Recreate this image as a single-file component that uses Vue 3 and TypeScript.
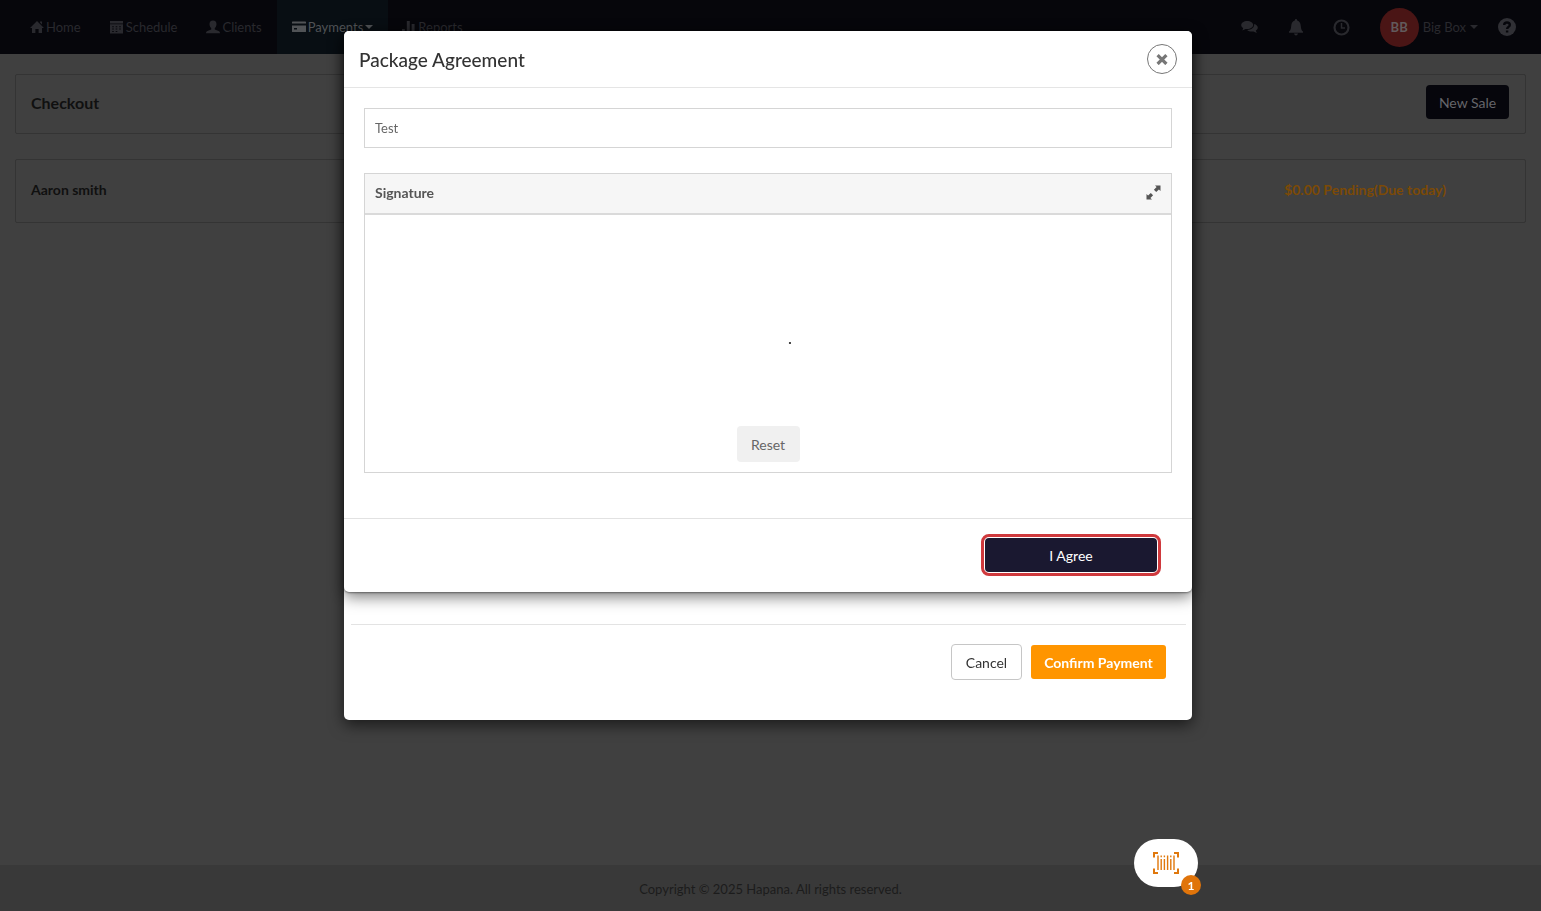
<script setup lang="ts">
import { ref } from 'vue'

interface NavItem {
  label: string
  icon: string
  active?: boolean
}

const navItems: NavItem[] = [
  { label: 'Home', icon: 'M7 1 L14 8 H12 V13 H8.6 V9 H5.4 V13 H2 V8 H0 Z M10 1.6 h2 v3 l-2 -2 z' },
  { label: 'Schedule', icon: 'M0 1 h13 v2.4 h-13 z M0 4.2 h13 v9.3 h-13 z M2.2 6.2 v1 h1.6 v-1 z M5.7 6.2 v1 h1.6 v-1 z M9.2 6.2 v1 h1.6 v-1 z M2.2 8.6 v1 h1.6 v-1 z M5.7 8.6 v1 h1.6 v-1 z M9.2 8.6 v1 h1.6 v-1 z M2.2 11 v1 h1.6 v-1 z M5.7 11 v1 h1.6 v-1 z' },
  { label: 'Clients', icon: 'M7 .5 C9.4 .5 10.6 2 10.5 4.2 C10.4 6.2 9.6 7.3 8.8 8.1 V9.4 L12.6 11 C13.6 11.5 14 12 14 13.3 H0 C0 12 .4 11.5 1.4 11 L5.2 9.4 V8.1 C4.4 7.3 3.6 6.2 3.5 4.2 C3.4 2 4.6 .5 7 .5 Z' },
  { label: 'Payments', icon: 'M0 2 Q0 1.4 .6 1.4 H13.4 Q14 1.4 14 2 V3.6 H0 Z M0 5.4 H14 V11.4 Q14 12 13.4 12 H.6 Q0 12 0 11.4 Z M2 8 v1.4 h3 v-1.4 z', active: true },
  { label: 'Reports', icon: 'M0 9 h2.8 v4.5 h-2.8 z M4.8 1 h3 v12.5 h-3 z M9.6 4 h3 v9.5 h-3 z' },
]

const agreementOpen = ref(true)
const hasStroke = ref(true)
</script>

<template>
  <div class="page">
    <header class="topbar">
      <nav class="nav">
        <a v-for="item in navItems" :key="item.label" href="#" class="nav-link" :class="{ active: item.active }">
          <svg width="14" height="14" viewBox="0 0 14 14" fill="currentColor" fill-rule="evenodd" aria-hidden="true"><path :d="item.icon" /></svg>
          <span>{{ item.label }}</span>
          <i v-if="item.active" class="caret"></i>
        </a>
      </nav>
      <div class="tools">
        <button class="tool" aria-label="Messages">
          <svg width="17" height="14" viewBox="0 0 17 14" fill="currentColor"><path d="M6.2 1 C9.6 1 12.2 2.7 12.2 5 S9.6 9 6.2 9 L4.6 8.9 L1.4 10.4 L2.2 8 C.9 7.3 .2 6.2 .2 5 C.2 2.7 2.9 1 6.2 1 Z M13.2 4 C15.4 4.6 16.8 6 16.8 7.6 C16.8 8.9 16 9.9 14.8 10.6 L15.8 13 L12.4 11.5 C9.5 11.8 7.2 11 6.2 9.9 C10.4 9.9 13.4 7.8 13.2 4 Z" /></svg>
        </button>
        <button class="tool" aria-label="Notifications">
          <svg width="16" height="17" viewBox="0 0 16 17" fill="currentColor"><path d="M8 0 C8.8 0 9.2 .6 9.2 1.5 C11.6 2.2 12.6 4 12.8 7 C13 10 13.6 11.4 15 12.6 V13.8 H1 V12.6 C2.4 11.4 3 10 3.2 7 C3.4 4 4.4 2.2 6.8 1.5 C6.8 .6 7.2 0 8 0 Z M6 14.6 H10 C9.8 15.8 9 16.4 8 16.4 S6.2 15.8 6 14.6 Z" /></svg>
        </button>
        <button class="tool" aria-label="History">
          <svg width="17" height="17" viewBox="0 0 17 17" fill="none" stroke="currentColor"><circle cx="8.5" cy="8.5" r="7" stroke-width="2.2" /><path d="M8.5 4 V9 H12" stroke-width="1.5" /></svg>
        </button>
        <button class="account">
          <span class="avatar">BB</span>
          <span>Big Box</span>
          <i class="caret"></i>
        </button>
        <button class="tool help" aria-label="Help">
          <svg width="18" height="18" viewBox="0 0 18 18"><circle cx="9" cy="9" r="9" fill="currentColor" /><path d="M6.2 7 C6.2 3.7 11.8 3.8 11.8 6.9 C11.8 8.8 9.1 8.9 9.1 11 M9.1 12.4 V14.4" fill="none" stroke="#06060b" stroke-width="2.4" /></svg>
        </button>
      </div>
    </header>

    <main class="content">
      <section class="card title-card">
        <h1>Checkout</h1>
        <button class="new-sale">New Sale</button>
      </section>
      <section class="card client-card">
        <strong>Aaron smith</strong>
        <strong class="pending">$0.00 Pending(Due today)</strong>
      </section>
    </main>

    <footer class="footer">Copyright © 2025 Hapana. All rights reserved.</footer>
  </div>

  <div class="modal-layer">
    <section class="dialog payment" aria-label="Payment">
      <div class="payment-actions">
        <button class="cancel">Cancel</button>
        <button class="confirm">Confirm Payment</button>
      </div>
    </section>

    <section v-if="agreementOpen" class="dialog agreement" role="dialog" aria-labelledby="agreement-title">
      <header class="dialog-head">
        <h2 id="agreement-title">Package Agreement</h2>
        <button class="close" aria-label="Close" @click="agreementOpen = false">
          <svg width="12" height="12" viewBox="0 0 12 12" fill="none" stroke="currentColor" stroke-width="3.2"><path d="M1.6 2.2 L10.4 11 M10.4 2.2 L1.6 11" /></svg>
        </button>
      </header>
      <div class="dialog-body">
        <div class="terms">Test</div>
        <div class="signature">
          <div class="signature-head">
            <h3>Signature</h3>
            <button class="expand" aria-label="Expand signature">
              <svg width="15" height="15" viewBox="0 0 15 15" fill="currentColor"><path d="M9 .5 H14.5 V6 L12.9 4.4 L10.2 7.1 L7.9 4.8 L10.6 2.1 Z M6 14.5 H.5 V9 L2.1 10.6 L4.8 7.9 L7.1 10.2 L4.4 12.9 Z" /></svg>
            </button>
          </div>
          <svg class="pad" role="img" aria-label="Signature pad"><rect v-if="hasStroke" x="52.6%" y="127" width="2" height="2" fill="#444" /></svg>
          <button class="reset" @click="hasStroke = false">Reset</button>
        </div>
      </div>
      <footer class="dialog-foot">
        <button class="agree" @click="agreementOpen = false">I Agree</button>
      </footer>
    </section>
  </div>

  <button class="scanner" aria-label="Open scanner">
    <svg width="28" height="24" viewBox="0 0 28 24" fill="none" stroke="#e0780c"><path d="M6 2 H2 V6.5 M22 2 H26 V6.5 M6 22 H2 V17.5 M22 22 H26 V17.5" stroke-width="2" /><path d="M6 4.5 V19 M9.2 8 V19 M12.4 8 V19 M15.6 4.5 V19 M18.8 8 V19 M22 4.5 V19" stroke-width="1.4" /><path d="M9.2 4.5 V6.2 M12.4 4.5 V6.2 M18.8 4.5 V6.2" stroke-width="1.4" /></svg>
    <span class="badge">1</span>
  </button>
</template>

<style>
body {
  margin: 0;
  background: #404040;
}
</style>

<style scoped>
.page,
.modal-layer,
.scanner {
  font-family: Lato, "Open Sans", sans-serif;
  font-size: 14px;
}
* {
  box-sizing: border-box;
}
button {
  font: inherit;
  border: 0;
  padding: 0;
  background: none;
  color: inherit;
  cursor: pointer;
}
h1, h2, h3 {
  margin: 0;
}
svg {
  display: block;
}
.page {
  display: flex;
  flex-direction: column;
  min-height: 100vh;
  background: #404040;
}
.topbar {
  display: flex;
  justify-content: space-between;
  height: 54px;
  padding: 0 25px 0 15px;
  background: #06060b;
  color: #29292e;
}
.nav {
  display: flex;
}
.nav-link {
  display: flex;
  align-items: center;
  gap: 2px;
  padding: 0 15px 0 14px;
  font-size: 13px;
  color: inherit;
  text-decoration: none;
}
.nav-link:first-child {
  padding-left: 15px;
}
.nav-link.active {
  padding: 0 15px;
  background: #080e13;
  color: #505356;
}
.caret {
  border: 4px solid transparent;
  border-top-color: currentColor;
  border-bottom: 0;
}
.tools {
  display: flex;
  align-items: center;
}
.tool {
  display: grid;
  place-items: center;
  width: 46px;
  height: 32px;
}
.tool.help {
  width: 18px;
  margin-left: 20px;
  color: #303035;
}
.account {
  display: flex;
  align-items: center;
  gap: 4px;
  margin-left: 15px;
  font-size: 13px;
}
.avatar {
  display: grid;
  place-items: center;
  width: 39px;
  height: 39px;
  border-radius: 50%;
  background: #4a1515;
  color: #625a5c;
  font-weight: 700;
}
.content {
  display: flex;
  flex: 1;
  flex-direction: column;
  gap: 25px;
  padding: 20px 15px;
}
.card {
  display: flex;
  justify-content: space-between;
  align-items: center;
  border: 1px solid #343434;
  border-radius: 2px;
  color: #101010;
}
.title-card {
  height: 60px;
  padding: 0 16px 4px 15px;
}
.title-card h1 {
  font-size: 16px;
  font-weight: 700;
}
.new-sale {
  height: 34px;
  width: 83px;
  border-radius: 4px;
  background: #06060c;
  color: #65656a;
}
.client-card {
  height: 64px;
  padding: 0 79px 4px 15px;
}
.pending {
  color: #7c4a06;
}
.footer {
  display: grid;
  place-items: center;
  height: 46px;
  padding-top: 2px;
  background: #393939;
  color: #1c1c1c;
  font-size: 13px;
}
.modal-layer {
  position: fixed;
  inset: 0;
  display: grid;
  grid-template-columns: minmax(0, 848px);
  justify-content: center;
  align-items: start;
  padding: 31px 5px 31px 0;
  overflow: auto;
}
.dialog {
  grid-area: 1 / 1;
  border-radius: 5px;
  background: #fff;
  box-shadow: 0 5px 15px rgba(0, 0, 0, 0.6);
}
.payment {
  display: flex;
  flex-direction: column;
  justify-content: flex-end;
  min-height: 689px;
  padding: 0 6px 40px 7px;
}
.payment-actions {
  display: flex;
  justify-content: flex-end;
  align-items: center;
  gap: 9px;
  padding: 19px 20px 0;
  border-top: 1px solid #e3e3e3;
}
.cancel {
  width: 71px;
  height: 36px;
  border: 1px solid #c6c6c6;
  border-radius: 4px;
  color: #333;
}
.confirm {
  width: 135px;
  height: 34px;
  border-radius: 3px;
  background: #ff9500;
  color: #fff;
  font-weight: 700;
}
.agreement {
  box-shadow: 0 5px 15px rgba(0, 0, 0, 0.5), 0 1px 2px rgba(0, 0, 0, 0.4);
}
.dialog-head {
  display: flex;
  align-items: center;
  justify-content: space-between;
  height: 57px;
  padding: 0 15px;
  border-bottom: 1px solid #e5e5e5;
}
.dialog-head h2 {
  font-size: 19px;
  font-weight: 500;
  color: #333;
}
.close {
  display: grid;
  place-items: center;
  width: 30px;
  height: 30px;
  border: 1px solid #777;
  border-radius: 50%;
  color: #777;
}
.dialog-body {
  display: flex;
  flex-direction: column;
  gap: 25px;
  padding: 20px 20px 45px;
}
.terms {
  height: 40px;
  padding: 0 10px;
  border: 1px solid #d5d5d5;
  color: #666;
  font-size: 13px;
  line-height: 38px;
}
.signature {
  display: flex;
  flex-direction: column;
  align-items: center;
  padding-bottom: 10px;
  border: 1px solid #d5d5d5;
}
.signature-head {
  display: flex;
  align-self: stretch;
  align-items: center;
  justify-content: space-between;
  height: 41px;
  padding: 0 10px 2px;
  border-bottom: 2px solid #dadada;
  background: #f6f6f6;
  color: #555;
}
.signature-head h3 {
  font-size: 14px;
}
.pad {
  width: 100%;
  height: 211px;
}
.reset {
  width: 63px;
  height: 36px;
  border-radius: 4px;
  background: #f0f0f0;
  color: #666;
}
.dialog-foot {
  display: flex;
  justify-content: flex-end;
  padding: 19px 35px 20px;
  border-top: 1px solid #e2e2e2;
}
.agree {
  width: 172px;
  height: 34px;
  border-radius: 4px;
  background: #1a1830;
  color: #fff;
  outline: 3px solid #cf393d;
  outline-offset: 1px;
}
.scanner {
  position: fixed;
  right: 343px;
  bottom: 24px;
  display: grid;
  place-items: center;
  width: 64px;
  height: 48px;
  border-radius: 24px;
  background: #fff;
}
.badge {
  position: absolute;
  right: -3px;
  bottom: -8px;
  display: grid;
  place-items: center;
  width: 20px;
  height: 20px;
  border-radius: 50%;
  background: #e0740a;
  color: #fff;
  font-size: 12px;
  font-weight: 700;
}
</style>
